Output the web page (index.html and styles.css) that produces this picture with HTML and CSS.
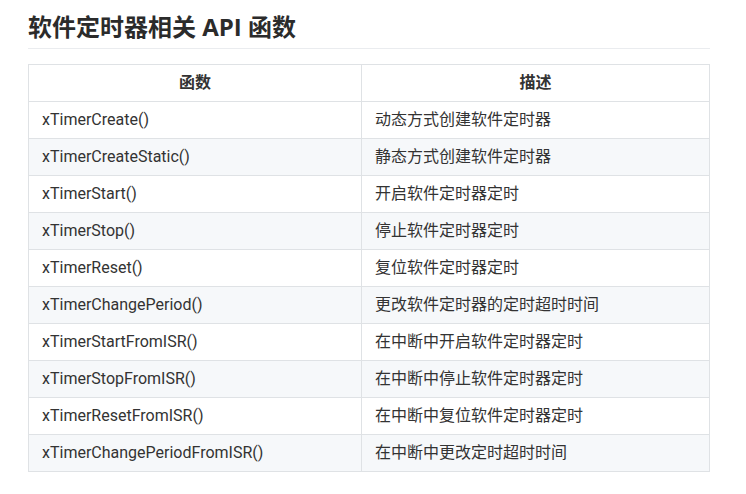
FILE: index.html
```html
<!DOCTYPE html>
<html lang="zh-CN">
<head>
<meta charset="utf-8">
<title>软件定时器相关 API 函数</title>
<link rel="stylesheet" href="styles.css">
</head>
<body>
<main class="doc">
  <h2 class="title">软件定时器相关 API 函数</h2>
  <table class="api">
    <thead>
      <tr><th class="c1">函数</th><th class="c2">描述</th></tr>
    </thead>
    <tbody>
      <tr><td>xTimerCreate()</td><td>动态方式创建软件定时器</td></tr>
      <tr><td>xTimerCreateStatic()</td><td>静态方式创建软件定时器</td></tr>
      <tr><td>xTimerStart()</td><td>开启软件定时器定时</td></tr>
      <tr><td>xTimerStop()</td><td>停止软件定时器定时</td></tr>
      <tr><td>xTimerReset()</td><td>复位软件定时器定时</td></tr>
      <tr><td>xTimerChangePeriod()</td><td>更改软件定时器的定时超时时间</td></tr>
      <tr><td>xTimerStartFromISR()</td><td>在中断中开启软件定时器定时</td></tr>
      <tr><td>xTimerStopFromISR()</td><td>在中断中停止软件定时器定时</td></tr>
      <tr><td>xTimerResetFromISR()</td><td>在中断中复位软件定时器定时</td></tr>
      <tr><td>xTimerChangePeriodFromISR()</td><td>在中断中更改定时超时时间</td></tr>
    </tbody>
  </table>
</main>
</body>
</html>
```

FILE: styles.css
```css
html, body {
  margin: 0;
  padding: 0;
  background: #ffffff;
}
body {
  font-family: "Open Sans", "Noto Sans CJK SC", sans-serif;
  color: #333333;
}
.doc {
  width: 682px;
  padding: 12px 0 0 28px;
}
.title {
  margin: 0 0 15px 0;
  font-family: "Open Sans", "Noto Sans CJK SC", sans-serif;
  font-size: 24px;
  font-weight: 700;
  line-height: 30px;
  padding-bottom: 6px;
  border-bottom: 1px solid #eaecef;
  color: #2b2b2b;
}
.api {
  border-collapse: collapse;
  width: 682px;
  font-family: Roboto, "Noto Sans CJK SC", sans-serif;
  font-size: 16px;
  line-height: 24px;
}
.api th, .api td {
  border: 1px solid #dfe2e5;
  padding: 6px 13px;
  text-align: left;
  font-weight: 400;
}
.api th {
  text-align: center;
  font-weight: 700;
}
.api .c1 { width: 306px; }
.api tbody tr:nth-child(2n) {
  background: #f6f8fa;
}
```
